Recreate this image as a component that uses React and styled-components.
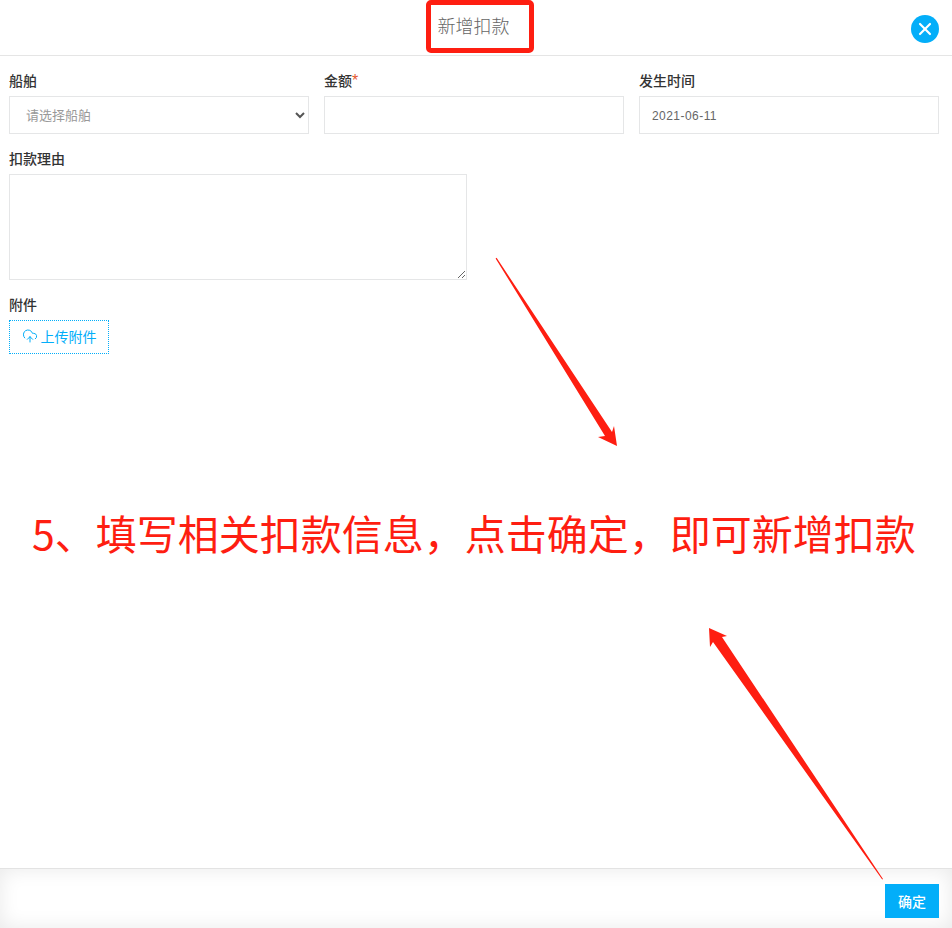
import React from 'react';
import styled, { createGlobalStyle } from 'styled-components';
import { CloudUpload, X } from 'lucide-react';

const FONT = '"Liberation Sans", "Noto Sans CJK SC", sans-serif';

const GlobalStyle = createGlobalStyle`
  html, body {
    margin: 0;
    padding: 0;
    background: #fff;
    font-family: ${FONT};
  }
  * {
    box-sizing: border-box;
  }
`;

const Page = styled.div`
  position: relative;
  display: flex;
  flex-direction: column;
  height: 928px;
  overflow: hidden;
  background: #fff;
`;

const Header = styled.header`
  position: relative;
  flex: none;
  display: flex;
  justify-content: center;
  height: 56px;
  padding: 14px 5px 0 0;
  border-bottom: 1px solid #e5e5e5;
`;

const Title = styled.h1`
  margin: 0;
  font-size: 18px;
  line-height: 26px;
  font-weight: 300;
  color: #666;
`;

const CloseButton = styled.button`
  position: absolute;
  top: 15px;
  right: 13px;
  display: flex;
  align-items: center;
  justify-content: center;
  width: 28px;
  height: 28px;
  padding: 0;
  border: none;
  border-radius: 50%;
  background: #03aef9;
  color: #fff;
`;

const Body = styled.main`
  flex: 1;
  display: flex;
  flex-direction: column;
  gap: 15px;
  padding: 15px 13px 0 9px;
`;

const Row = styled.div`
  display: grid;
  grid-template-columns: repeat(3, 300px);
  column-gap: 15px;
`;

const Field = styled.div`
  display: flex;
  flex-direction: column;
  width: ${(p) => p.$width || 'auto'};
`;

const Label = styled.label`
  height: 25px;
  font-size: 14px;
  line-height: 20px;
  font-weight: 500;
  color: #333;
`;

const Required = styled.span`
  font-size: 16px;
  line-height: 16px;
  font-weight: 400;
  color: #e4572e;
`;

const Select = styled.select`
  height: 38px;
  padding: 0 12px;
  border: 1px solid #e5e6e7;
  border-radius: 0;
  background: #fff;
  font-family: ${FONT};
  font-size: 13px;
  color: #555;
  -webkit-text-fill-color: #999;
  outline: none;
`;

const Input = styled.input`
  height: 38px;
  padding: 1px 12px 0;
  border: 1px solid #e5e6e7;
  background: #fff;
  font-family: ${FONT};
  font-size: 12px;
  letter-spacing: 0.45px;
  color: #666;
  outline: none;
`;

const TextArea = styled.textarea`
  display: block;
  height: 106px;
  padding: 6px 12px;
  border: 1px solid #e5e6e7;
  background: #fff;
  font-family: ${FONT};
  font-size: 13px;
  outline: none;
`;

const UploadButton = styled.button`
  display: flex;
  align-items: center;
  justify-content: center;
  gap: 3px;
  width: 100px;
  height: 34px;
  padding: 0 0 2px;
  border: 1px dotted #03aef9;
  background: #fff;
  font-family: ${FONT};
  font-size: 14px;
  color: #03aef9;
`;

const Footer = styled.footer`
  flex: none;
  display: flex;
  justify-content: flex-end;
  align-items: flex-start;
  height: 60px;
  padding: 15px 13px 0 0;
  border-top: 1px solid #e3e3e3;
  background: #fff;
  box-shadow: inset 0 0 20px rgba(0, 0, 0, 0.09);
`;

const ConfirmButton = styled.button`
  width: 54px;
  height: 34px;
  padding: 0;
  border: none;
  background: #03aef9;
  font-family: ${FONT};
  font-size: 14px;
  font-weight: 500;
  color: #fff;
`;

// the red notes drawn over the screenshot
const TitleMark = styled.div`
  position: absolute;
  left: 426px;
  top: 0;
  width: 108px;
  height: 53px;
  border: 5px solid #fe1e11;
  border-radius: 5px;
`;

const Note = styled.div`
  position: absolute;
  left: 32px;
  top: 506px;
  font-family: "Noto Sans CJK SC", "Liberation Sans", sans-serif;
  font-size: 41px;
  line-height: 52px;
  font-weight: 400;
  white-space: nowrap;
  color: #fe1e11;
`;

const Arrows = styled.svg`
  position: absolute;
  left: 0;
  top: 0;
  pointer-events: none;
`;

export default function App() {
  return (
    <Page>
      <GlobalStyle />
      <Header>
        <Title>新增扣款</Title>
        <CloseButton aria-label="关闭">
          <X size={20} strokeWidth={2.6} />
        </CloseButton>
      </Header>

      <Body>
        <Row>
          <Field>
            <Label>船舶</Label>
            <Select defaultValue="">
              <option value="">请选择船舶</option>
            </Select>
          </Field>
          <Field>
            <Label>
              金额<Required>*</Required>
            </Label>
            <Input />
          </Field>
          <Field>
            <Label>发生时间</Label>
            <Input defaultValue="2021-06-11" />
          </Field>
        </Row>

        <Field $width="458px">
          <Label>扣款理由</Label>
          <TextArea />
        </Field>

        <Field $width="100px">
          <Label>附件</Label>
          <UploadButton>
            <CloudUpload size={16} strokeWidth={1.5} />
            上传附件
          </UploadButton>
        </Field>
      </Body>

      <Footer>
        <ConfirmButton>确定</ConfirmButton>
      </Footer>

      <TitleMark />
      <Note>5、填写相关扣款信息，点击确定，即可新增扣款</Note>
      <Arrows width="952" height="928" viewBox="0 0 952 928" fill="#fe1e11">
        <polygon points="495.6,258.4 496.6,257.8 612,432 614,426 617,446 598,437 605,436" />
        <polygon points="883,879 882.2,879.6 713,642 710,647 709,628 727,636 722,637" />
      </Arrows>
    </Page>
  );
}
